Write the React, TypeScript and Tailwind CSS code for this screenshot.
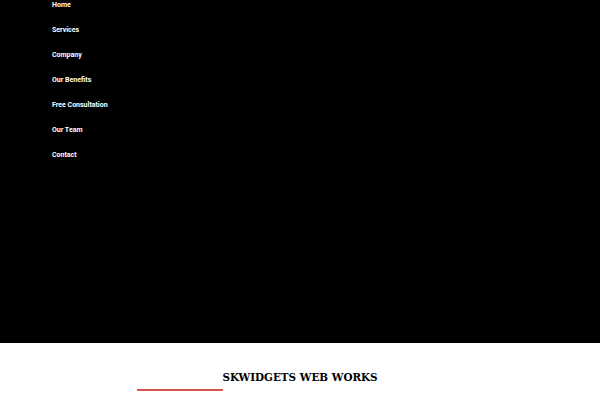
export default function App() {
  const links = ["Home", "Services", "Company", "Our Benefits", "Free Consultation", "Our Team", "Contact"];

  return (
    <div className="w-[600px] h-[400px] overflow-hidden bg-white">
      <nav className="h-[343px] bg-black overflow-hidden">
        <ul className="-mt-[7px] pl-[52px] flex flex-col">
          {links.map((link) => (
            <li
              key={link}
              className="h-[25px] flex items-center text-white text-[7px] font-bold"
              style={{ fontFamily: "Roboto, 'Liberation Sans', sans-serif" }}
            >
              {link}
            </li>
          ))}
        </ul>
      </nav>
      <section className="pt-[29px]">
        <h2
          className="text-center text-[10.4px] font-bold text-black leading-none"
          style={{ fontFamily: "'DejaVu Serif', serif" }}
        >
          SKWIDGETS WEB WORKS
        </h2>
        <div className="ml-[137px] mt-[7px] w-[86px] h-[2px] bg-[#d9534f]" />
      </section>
    </div>
  );
}
